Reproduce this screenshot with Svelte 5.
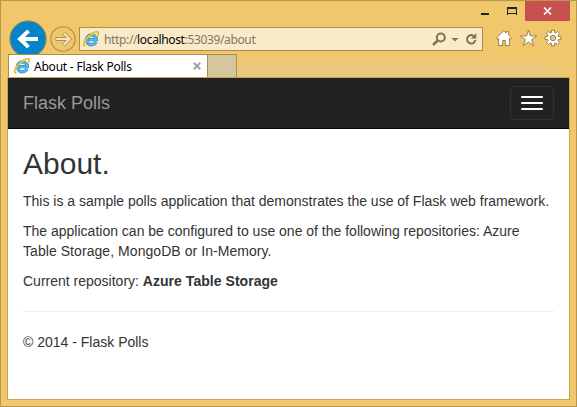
<script>
  const paragraphs = [
    ['This is a sample polls application that demonstrates the use of Flask web framework.'],
    [
      'The application can be configured to use one of the following repositories: Azure',
      'Table Storage, MongoDB or In-Memory.'
    ]
  ];

  // Eight-toothed gear outline centred on (cx, cy).
  function gear(cx, cy, outer, inner) {
    const points = [];
    for (let i = 0; i < 8; i++) {
      const a = (i * Math.PI) / 4;
      for (const [offset, r] of [[-0.27, inner], [-0.19, outer], [0.19, outer], [0.27, inner]]) {
        points.push(`${cx + r * Math.cos(a + offset)},${cy + r * Math.sin(a + offset)}`);
      }
    }
    return points.join(' ');
  }
</script>

{#snippet ieLogo()}
  <svg class="ie" width="16" height="16" viewBox="0 0 16 16">
    <path d="M13 10.800A5 5 0 1 1 13.400 8.700H5.200" fill="none" stroke="#2e8ccb" stroke-width="3.300" />
    <path d="M13 10.800A5 5 0 1 1 13.400 8.700H5.200" fill="none" stroke="#55b9ea" stroke-width="2" />
    <path d="M2.200 15.200C-.8 14 1.500 8.900 5.600 5.300S14.300-.4 15.200 1.600c.4.900 0 2-.6 3" fill="none" stroke="#e8b21c" stroke-width="1.700" />
    <path d="M2.200 14.700C.2 13.300 2 9.200 5.900 5.600S13.600.500 14.800 1.700" fill="none" stroke="#ffdc45" stroke-width=".9" />
  </svg>
{/snippet}

<div class="window">
  <div class="titlebar">
    <svg width="44" height="20" viewBox="0 0 44 20"><path d="M0 12h8v2H0z" fill="#222" /><path d="M26 6h10v2H26z" fill="#222" /><path d="M26.500 6v8M35.500 6v8M26 12.500h10" stroke="#222" /></svg>
    <div class="close">
      <svg width="9" height="8" viewBox="0 0 9 8"><path d="M1 .5 8 7.500M8 .5 1 7.500" stroke="#fff" stroke-width="1.7" /></svg>
    </div>
  </div>

  <div class="toolbar">
    <svg class="back" width="38" height="38" viewBox="0 0 38 38">
      <circle cx="19" cy="19" r="18.100" fill="#0684c8" stroke="#9a8350" stroke-width="1" />
      <path d="M29 19H11.500M19.500 10.800 11 19l8.500 8.200" fill="none" stroke="#fff" stroke-width="3.900" />
    </svg>
    <svg class="forward" width="26" height="26" viewBox="0 0 26 26">
      <circle cx="13" cy="13" r="12.200" fill="#efc66b" stroke="#b08d45" stroke-width="1.100" />
      <path d="M5.500 13h13M13.500 7l6 6-6 6" fill="none" stroke="#ae9152" stroke-width="3.800" />
      <path d="M6.200 13h12M13.800 7.300l5.700 5.700-5.700 5.700" fill="none" stroke="#f8e5ba" stroke-width="2.200" />
    </svg>
    <div class="address">
      {@render ieLogo()}
      <span class="url">http://<b>localhost</b>:53039/about</span>
      <svg class="tools" width="46" height="16" viewBox="0 0 46 16">
        <g fill="none" stroke="#807252">
          <circle cx="8.800" cy="6.500" r="4" stroke-width="2" />
          <path d="M5.800 9.500 1 14" stroke-width="2.500" />
          <path d="M41.500 4.800A4.200 4.200 0 1 0 43.400 8.800" stroke-width="2" />
        </g>
        <path d="M19.500 7h7l-3.500 3.500zM44.300 2v5.400h-5.400z" fill="#807252" />
      </svg>
    </div>
    <svg class="actions" width="68" height="18" viewBox="0 0 68 18">
      <g fill="#fff" stroke="#8d7745" stroke-width=".9" stroke-linejoin="round">
        <path d="M9 1.500 1.400 9.100l1.200 1.200 1-.9v7.100h4.100v-5h2.600v5h4.100V9.400l1 .9 1.200-1.200-3-3V2.500h-2.400v1.600z" />
        <path d="m33.500 1 1.900 5.900h6.300l-5 3.700 1.900 6.100-5.100-3.800-5.100 3.800 1.900-6.100-5-3.700h6.300z" />
        <polygon points={gear(58, 9, 8, 5.7)} />
        <circle cx="58" cy="9" r="2.700" fill="#efc66b" />
      </g>
    </svg>
  </div>

  <div class="tabs">
    <div class="tab">
      {@render ieLogo()}
      <span class="label">About - Flask Polls</span>
      <svg class="x" width="8" height="8" viewBox="0 0 8 8"><path d="M.7.700l6.600 6.600M7.300.700.7 7.300" stroke="#a3a3a3" stroke-width="2" /></svg>
    </div>
    <div class="newtab"></div>
    <div class="shade"></div>
  </div>

  <div class="page">
    <nav>
      <span class="brand">Flask Polls</span>
      <div class="toggle"><i></i><i></i><i></i></div>
    </nav>
    <main>
      <h2>About.</h2>
      {#each paragraphs as lines}
        <p>{#each lines as line}<span class="line">{line}</span>{/each}</p>
      {/each}
      <p>Current repository: <strong>Azure Table Storage</strong></p>
      <hr />
      <p>© 2014 - Flask Polls</p>
    </main>
  </div>
</div>

<style>
  :global(body) { margin: 0; overflow: hidden; }
  .window {
    box-sizing: border-box; width: 577px; height: 407px; padding: 0 6px;
    border: 1px solid #b7964d; background: #f0c76a;
    display: flex; flex-direction: column;
  }
  .titlebar { height: 20px; display: flex; justify-content: flex-end; }
  .titlebar svg { display: block; }
  .close { width: 45px; height: 20px; margin-right: 0; background: #c75050; display: flex; align-items: center; justify-content: center; }
  .toolbar { height: 33px; display: flex; align-items: flex-start; padding-left: 2px; flex: none; }
  .toolbar svg { display: block; flex: none; }
  .back { margin-top: -1px; }
  .forward { margin: 5px 0 0 3px; }
  .address {
    box-sizing: border-box; width: 404px; height: 24px; margin: 6px 0 0 3px; padding: 0 4px 0 3px;
    border: 1px solid #ab8e4c; background: #faeaca;
    display: flex; align-items: center;
  }
  .url, .label { font-family: "Noto Sans", sans-serif; white-space: nowrap; line-height: 16px; }
  .url { font-size: 12px; color: #817765; letter-spacing: -.36px; margin: 0 auto 0 5px; padding-top: 2px; }
  .url b { font-weight: 400; color: #000; }
  .actions { margin: 8px 0 0 12px; }
  .tabs { height: 23px; flex: none; display: flex; position: relative; z-index: 1; }
  .tab {
    box-sizing: border-box; width: 200px; height: 23px; margin-left: 1px; padding: 0 6px 0 5px;
    border: 1px solid #ab8e4c; border-bottom: 0; background: #fff;
    display: flex; align-items: center;
  }
  .label { font-size: 12px; color: #000; margin: 0 auto 0 4px; padding-top: 1px; letter-spacing: -.22px; }
  .newtab { box-sizing: border-box; width: 29px; border: 1px solid #ab8e4c; border-width: 1px 1px 0 0; background: #d6c69e; }
  .shade {
    flex: 1; background: linear-gradient(#f0c76a, #e4c983);
    -webkit-mask-image: linear-gradient(90deg, #000 92%, transparent);
    mask-image: linear-gradient(90deg, #000 92%, transparent);
  }
  .page {
    box-sizing: border-box; width: 563px; height: 323px; flex: none;
    border: 1px solid #c5a458; background: #fff; color: #333;
    font: 14px/20px "Liberation Sans", Arial, sans-serif;
  }
  nav {
    box-sizing: border-box; height: 51px; padding: 0 15px; background: #222; border-bottom: 1px solid #080808;
    display: flex; align-items: center; justify-content: space-between;
  }
  .brand { font-size: 18px; color: #999; }
  .toggle {
    box-sizing: border-box; width: 44px; height: 34px; padding: 0 10px;
    border: 1px solid #333; border-radius: 4px;
    display: flex; flex-direction: column; justify-content: center; gap: 4px;
  }
  .toggle i { height: 2px; background: #fff; border-radius: 1px; }
  main { padding: 18px 15px 0; }
  h2 { margin: 0 0 11px; font-size: 30px; line-height: 33px; font-weight: 400; }
  p { margin: 0 0 10px; }
  .line { display: block; white-space: nowrap; }
  .line + .line { letter-spacing: .06px; }
  strong { letter-spacing: .04px; }
  hr { margin: 20px 0; border: 0; border-top: 1px solid #eee; }
</style>
